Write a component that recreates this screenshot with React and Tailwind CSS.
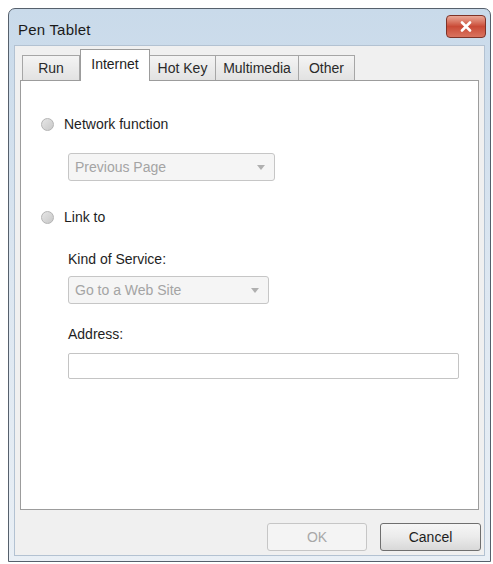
import React from "react";

const tabs = [
  { label: "Run", w: "w-[58px]" },
  { label: "Internet", w: "w-[70px]", active: true },
  { label: "Hot Key", w: "w-[67px]" },
  { label: "Multimedia", w: "w-[84px]" },
  { label: "Other", w: "w-[57px]" },
];

function Radio({ label }) {
  return (
    <div className="flex items-center gap-[10px]">
      <span className="w-[13px] h-[13px] rounded-full border border-[#b4b4b4] bg-gradient-to-br from-[#e6e6e6] to-[#c8c8c8]" />
      <span className="text-[#1e1e1e]">{label}</span>
    </div>
  );
}

function Combo({ value, width }) {
  return (
    <div
      className={`${width} h-[28px] flex items-center justify-between pl-[6px] pr-[9px] border border-[#c6c6c6] rounded-[3px] bg-[#f5f5f5] text-[#a4a4a4]`}
    >
      <span>{value}</span>
      <svg width="8" height="5" viewBox="0 0 8 5">
        <path d="M0 0 L8 0 L4 5 Z" fill="#b0b0b0" />
      </svg>
    </div>
  );
}

export default function App() {
  return (
    <div
      className="w-[493px] h-[564px] bg-white pt-[8px] pl-[8px] pr-[2px] pb-[2px] text-[14px]"
      style={{ fontFamily: '"Liberation Sans", Arial, sans-serif' }}
    >
      <div className="h-full flex flex-col border border-[#56606c] rounded-t-[7px] bg-gradient-to-b from-[#c9daea] via-[#dde7f1] to-[#e9eff5]">
        {/* title bar */}
        <div className="h-[36px] flex items-start justify-between pl-[9px] pr-[4px]">
          <span className="mt-[10px] text-[15px] text-[#1a1a1a] tracking-[0.2px]">Pen Tablet</span>
          <div className="mt-[6px] w-[40px] h-[23px] rounded-[4px] border border-[#7e3328] bg-gradient-to-b from-[#e9a898] via-[#c94a36] to-[#d9735f] flex items-center justify-center">
            <svg width="12" height="11" viewBox="0 0 12 11">
              <path d="M2 1.5 L10 9.5 M10 1.5 L2 9.5" stroke="#fff" strokeWidth="2.6" strokeLinecap="round" />
            </svg>
          </div>
        </div>

        {/* client area */}
        <div className="flex-1 mx-[5px] mb-[5px] border border-[#b3c2d2] bg-[#f0f0f0] flex flex-col px-[5px] pt-[2px]">
          <div className="flex items-end pl-[2px] h-[32px]">
            {tabs.map((t) =>
              t.active ? (
                <div
                  key={t.label}
                  className={`${t.w} h-[32px] -mb-px relative z-10 bg-white border border-[#9c9c9c] border-b-0 flex justify-center pt-[4px] text-[#1e1e1e]`}
                >
                  {t.label}
                </div>
              ) : (
                <div
                  key={t.label}
                  className={`${t.w} h-[25px] bg-gradient-to-b from-[#f4f4f4] to-[#e2e2e2] border border-[#a6a6a6] border-b-0 -ml-px first:ml-0 flex justify-center items-center text-[#2a2a2a]`}
                >
                  {t.label}
                </div>
              )
            )}
          </div>

          {/* panel */}
          <div className="h-[430px] bg-white border border-[#9c9c9c] pl-[20px] pt-[33px] flex flex-col">
            <Radio label="Network function" />
            <div className="ml-[27px] mt-[18px]">
              <Combo value="Previous Page" width="w-[207px]" />
            </div>
            <div className="mt-[26px]">
              <Radio label="Link to" />
            </div>
            <div className="ml-[27px] mt-[21px] text-[#1e1e1e]">Kind of Service:</div>
            <div className="ml-[27px] mt-[6px]">
              <Combo value="Go to a Web Site" width="w-[201px]" />
            </div>
            <div className="ml-[27px] mt-[20px] text-[#1e1e1e]">Address:</div>
            <div className="ml-[27px] mt-[8px] w-[391px] h-[26px] bg-white border border-[#c4c4c4] rounded-[2px]" />
          </div>

          {/* buttons */}
          <div className="flex justify-end gap-[13px] mt-[13px] -mr-[2px]">
            <div className="w-[100px] h-[28px] rounded-[3px] border border-[#c6c6c6] bg-[#f4f4f4] flex items-center justify-center text-[#a8a8a8]">
              OK
            </div>
            <div className="w-[101px] h-[28px] rounded-[3px] border border-[#6f6f6f] bg-gradient-to-b from-[#f6f6f6] via-[#ebebeb] to-[#d8d8d8] flex items-center justify-center text-[#1e1e1e]">
              Cancel
            </div>
          </div>
        </div>
      </div>
    </div>
  );
}
